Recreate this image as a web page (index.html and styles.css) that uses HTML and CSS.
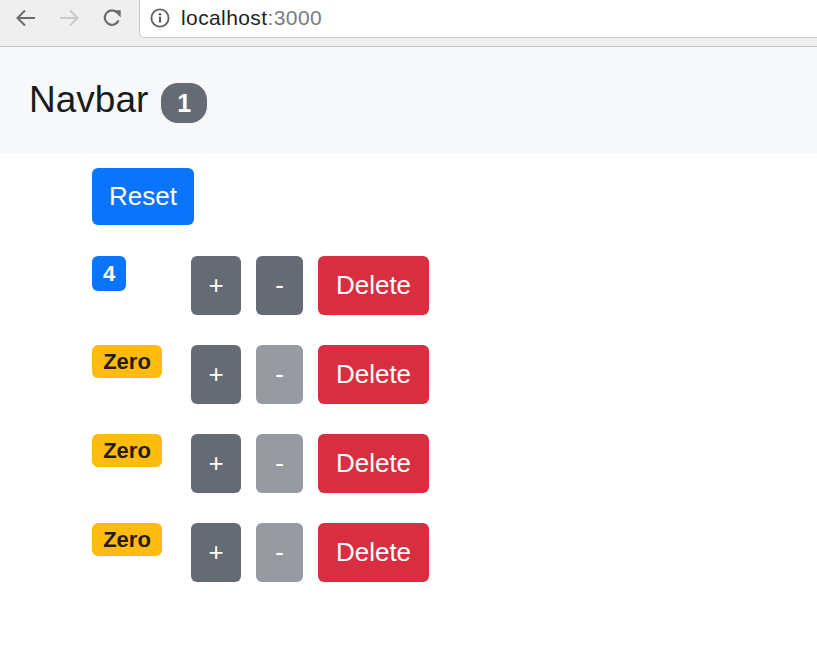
FILE: index.html
```html
<!DOCTYPE html>
<html>
<head>
<meta charset="utf-8">
<link rel="stylesheet" href="styles.css">
</head>
<body>
<div class="chrome">
  <div class="nav-icons">
    <svg class="ic" width="22" height="22" viewBox="0 0 22 22"><path d="M20 11H3M10 3.5L2.5 11 10 18.5" fill="none" stroke="#6b6b6b" stroke-width="2"/></svg>
    <svg class="ic" width="22" height="22" viewBox="0 0 22 22"><path d="M2 11h17M12 3.5L19.5 11 12 18.5" fill="none" stroke="#c9c9c9" stroke-width="2"/></svg>
    <svg class="ic" width="22" height="22" viewBox="0 0 22 22"><path d="M17.6 13.5A7.2 7.2 0 1 1 16.2 5.6" fill="none" stroke="#6b6b6b" stroke-width="2.2"/><path d="M12.5 3.2h7.2v7.2z" fill="#6b6b6b"/></svg>
  </div>
  <div class="omnibox">
    <svg class="info" width="20" height="20" viewBox="0 0 20 20"><circle cx="10" cy="10" r="8.6" fill="none" stroke="#5f5f5f" stroke-width="1.8"/><circle cx="10" cy="6.2" r="1.3" fill="#5f5f5f"/><rect x="8.9" y="8.6" width="2.2" height="6" fill="#5f5f5f"/></svg>
    <span class="host">localhost</span><span class="port">:3000</span>
  </div>
</div>
<nav class="navbar">
  <span class="brand">Navbar</span>
  <span class="badge badge-pill">1</span>
</nav>
<main class="main">
  <button class="btn btn-primary btn-reset">Reset</button>
  <div class="counters">
    <div class="row">
      <div class="cell"><span class="badge badge-blue">4</span></div>
      <button class="btn btn-secondary btn-plus">+</button>
      <button class="btn btn-secondary btn-minus">-</button>
      <button class="btn btn-danger">Delete</button>
    </div>
    <div class="row">
      <div class="cell"><span class="badge badge-warn">Zero</span></div>
      <button class="btn btn-secondary btn-plus">+</button>
      <button class="btn btn-secondary btn-minus disabled">-</button>
      <button class="btn btn-danger">Delete</button>
    </div>
    <div class="row">
      <div class="cell"><span class="badge badge-warn">Zero</span></div>
      <button class="btn btn-secondary btn-plus">+</button>
      <button class="btn btn-secondary btn-minus disabled">-</button>
      <button class="btn btn-danger">Delete</button>
    </div>
    <div class="row">
      <div class="cell"><span class="badge badge-warn">Zero</span></div>
      <button class="btn btn-secondary btn-plus">+</button>
      <button class="btn btn-secondary btn-minus disabled">-</button>
      <button class="btn btn-danger">Delete</button>
    </div>
  </div>
</main>
</body>
</html>
```
FILE: styles.css
```css
html, body {
  margin: 0;
  padding: 0;
  background: #ffffff;
  font-family: "Liberation Sans", Arial, sans-serif;
  color: #212529;
}

.chrome {
  height: 46px;
  background: #f0eff0;
  border-bottom: 1px solid #c4c4c4;
  display: flex;
  align-items: flex-start;
}

.nav-icons {
  display: flex;
  gap: 21px;
  padding: 7px 0 0 15px;
  width: 139px;
  flex: none;
  box-sizing: border-box;
}

.ic {
  display: block;
  flex: none;
}

.omnibox {
  flex: 1;
  height: 38px;
  box-sizing: border-box;
  background: #ffffff;
  border: 1px solid #c9c9c9;
  border-top: none;
  border-right: none;
  border-bottom-left-radius: 5px;
  display: flex;
  align-items: center;
  padding-left: 10px;
  padding-bottom: 2px;
  font-size: 21px;
  letter-spacing: 0.4px;
}

.info {
  margin-right: 11px;
  flex: none;
}

.host {
  color: #1f1f1f;
}

.port {
  color: #7c7c7c;
}

.navbar {
  height: 106px;
  background: #f7f8fa;
  display: flex;
  align-items: center;
  padding-left: 29px;
  gap: 13px;
}

.brand {
  font-size: 37px;
  color: #1b1b1b;
  line-height: 1;
  margin-top: -2px;
}

.badge {
  display: inline-flex;
  align-items: center;
  justify-content: center;
  font-weight: 700;
  box-sizing: border-box;
  line-height: 1;
}

.badge-pill {
  width: 46px;
  height: 40px;
  border-radius: 17px;
  background: #646b74;
  color: #ffffff;
  font-size: 25px;
  margin-top: 6px;
}

.main {
  padding: 15px 0 40px 92px;
}

.btn {
  border: none;
  color: #ffffff;
  font-family: "Liberation Sans", Arial, sans-serif;
  font-size: 26px;
  border-radius: 6px;
  padding: 0;
  display: block;
  cursor: pointer;
}

.btn-reset {
  width: 102px;
  height: 57px;
}

.btn-primary {
  background: #0a75fb;
}

.btn-secondary {
  background: #646b74;
}

.btn-secondary.disabled {
  background: #979ba1;
}

.btn-danger {
  background: #d92e42;
  width: 111px;
}

.btn-plus {
  width: 50px;
}

.btn-minus {
  width: 47px;
}

.counters {
  display: flex;
  flex-direction: column;
  gap: 30px;
  margin-top: 31px;
}

.row {
  display: flex;
  align-items: flex-start;
  gap: 15px;
}

.row .btn {
  height: 59px;
}

.cell {
  width: 84px;
  flex: none;
}

.badge-blue {
  width: 34px;
  height: 35px;
  border-radius: 6px;
  background: #0a75fb;
  color: #ffffff;
  font-size: 22px;
}

.badge-warn {
  width: 70px;
  height: 33px;
  border-radius: 6px;
  background: #ffbb10;
  color: #231d10;
  font-size: 22px;
}
```
